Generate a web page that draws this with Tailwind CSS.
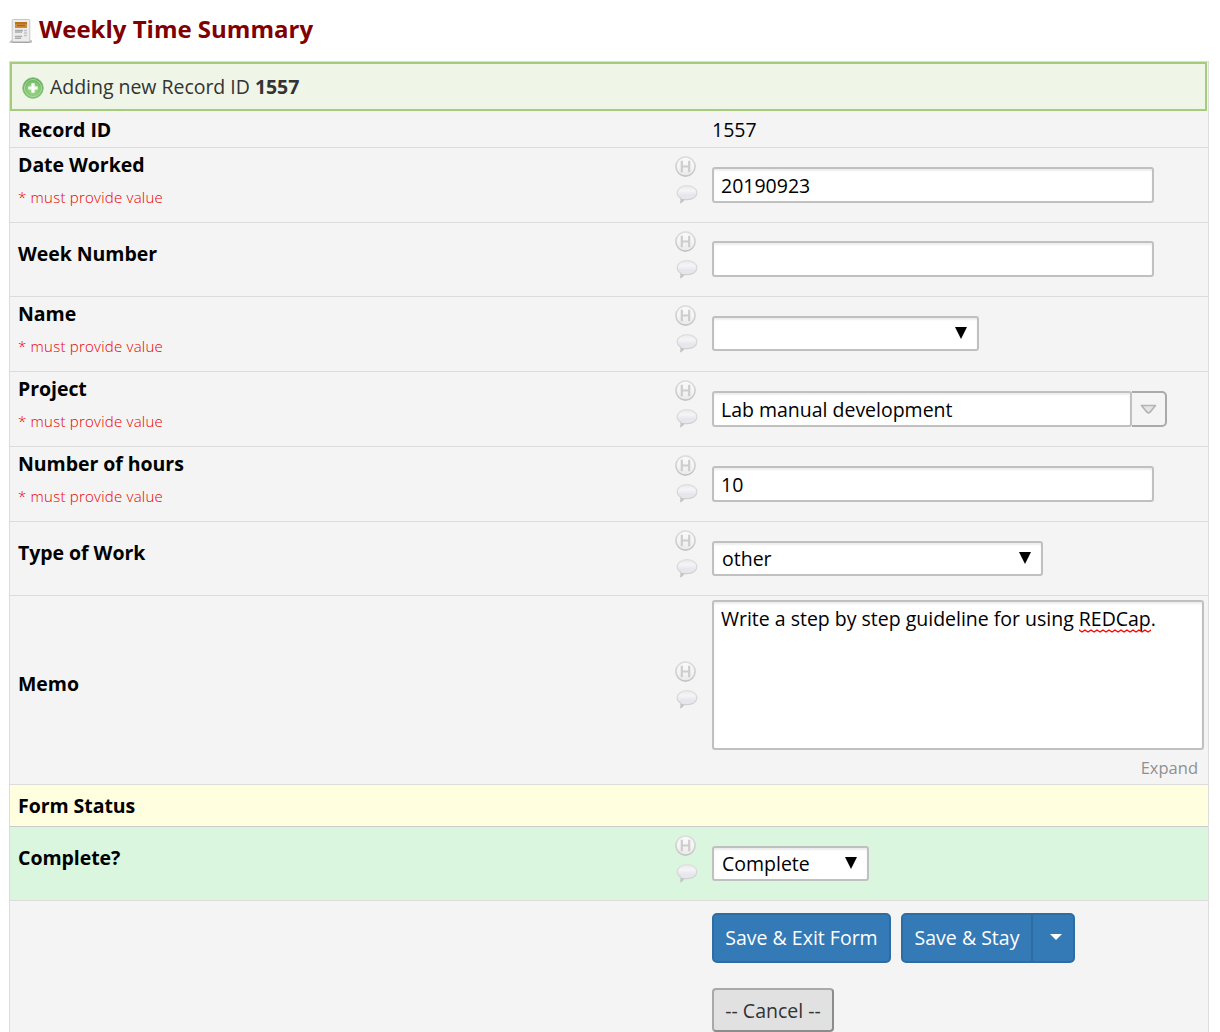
<!DOCTYPE html>
<html lang="en">
<head>
<meta charset="utf-8">
<title>Weekly Time Summary</title>
<script src="https://cdn.jsdelivr.net/npm/@tailwindcss/browser@4"></script>
</head>
<body class="bg-white font-['Open_Sans',sans-serif] text-[19.5px] text-black">
<svg class="absolute h-0 w-0">
  <defs>
    <linearGradient id="disc" x1="0" y1="0" x2="0" y2="1"><stop offset="0" stop-color="#fafafa"/><stop offset=".55" stop-color="#f4f4f4"/><stop offset="1" stop-color="#e9e9e9"/></linearGradient>
    <linearGradient id="bub" x1="0" y1="0" x2="0" y2="1"><stop offset="0" stop-color="#e9e9eb"/><stop offset=".3" stop-color="#f5f5f7"/><stop offset=".55" stop-color="#e6e6ed"/><stop offset="1" stop-color="#e8e8ec"/></linearGradient>
    <linearGradient id="edge" x1="0" y1="0" x2="0" y2="1"><stop offset="0" stop-color="#dedede"/><stop offset="1" stop-color="#c3c3c3"/></linearGradient>
    <linearGradient id="bedge" x1="0" y1="0" x2="0" y2="1"><stop offset="0" stop-color="#dfdfdf"/><stop offset="1" stop-color="#cdcdcf"/></linearGradient>
  </defs>
  <symbol id="tools" viewBox="0 0 24 50">
    <circle cx="10.5" cy="10.5" r="9.6" fill="url(#disc)" stroke="url(#edge)" stroke-width="1.6"/>
    <path d="M6.800 4.800v11.400M14.200 4.800v11.400M6.800 10.500h7.400" fill="none" stroke="#cdcdcd" stroke-width="2.200"/>
    <path d="M12 29.700c5.700 0 9.900 3.200 9.900 7.100s-4.300 6.800-9.600 6.800c-1 0-2-.1-2.900-.3-.9 1.500-2.100 2.700-3.700 3.300.4-1.400.5-2.900.2-4.300-2.200-1.300-3.700-3.200-3.700-5.500 0-3.900 4.200-7.100 9.800-7.100z" fill="url(#bub)" stroke="url(#bedge)" stroke-width="1.200"/>
    <path d="M5.400 42.600c.5 1.500.4 2.900 0 4.400 1.700-.6 2.900-1.800 3.900-3.500z" fill="#c4c4c6"/>
  </symbol>
</svg>
<div class="flex h-[1032px] flex-col overflow-hidden pl-[9px]">
  <header class="flex h-[61px] shrink-0 pt-[13px]">
    <svg class="mt-[4px] h-[27px] w-[24px]" viewBox="0 0 24 27">
      <path d="M0 25.800h23v-2.500H2z" fill="#bdbdbd"/>
      <rect x="3.200" y="2.500" width="17.600" height="22.500" rx="1" fill="#ececec" stroke="#c6c6c6"/>
      <path d="M3.200 25.300h17.600" stroke="#9c9c9c"/>
      <rect x="6" y="5" width="12" height="6" fill="#cd8a38"/><path d="M6 6h12" stroke="#b06d14" stroke-width="1.500"/><path d="M8 8.500h8" stroke="#a0651c" stroke-width="1.200"/>
      <path d="M6 13.500h8M6 15.200h7M6 19.500h7M6 21.300h6" stroke="#aaa" stroke-width="1.300"/><path d="M15 13.500h3M15 16h3M15 18.500h3" stroke="#c4c4c4" stroke-width="1.500"/>
    </svg>
    <h1 class="ml-[6px] text-[24px] leading-[32px] font-bold whitespace-nowrap text-[#800000]">Weekly Time Summary</h1>
  </header>
  <main class="flex w-[1200px] grow flex-col border-x border-t border-[#dcdcdc] bg-[#f4f4f4]">
    <div class="-mr-px flex h-[49px] w-[1197px] shrink-0 items-center border-2 border-[#a5cc7a] bg-[#eff6e8] pl-[10px] text-[#333]">
      <svg class="mt-[3px] h-[22px] w-[22px]" viewBox="0 0 22 22">
        <defs><radialGradient id="g" cx=".5" cy=".6" r=".55"><stop offset="0" stop-color="#a5db8c"/><stop offset=".7" stop-color="#7cc46c"/><stop offset="1" stop-color="#5ba653"/></radialGradient></defs>
        <circle cx="11" cy="11" r="10.300" fill="url(#g)" stroke="#8cb886" stroke-width=".8"/><circle cx="11" cy="11" r="8.500" fill="none" stroke="#b9e2ac" stroke-width=".8"/>
        <path d="M11 6.300v9.400M6.300 11h9.400" stroke="#fff" stroke-width="3.200"/>
      </svg>
      <p class="ml-[6px] leading-[28px] tracking-[-0.03px] whitespace-nowrap">Adding new Record ID <b class="font-bold">1557</b></p>
    </div>
    <div class="grid h-[37px] shrink-0 grid-cols-[657px_37px_1fr] border-b border-[#dcdcdc] pl-[8px]">
      <div class="pt-[5px] leading-[28px] font-bold tracking-[-0.05px]">Record ID</div><div></div><div class="pt-[5px] leading-[28px]">1557</div>
    </div>
    <div class="grid h-[75px] shrink-0 grid-cols-[657px_37px_1fr] border-b border-[#dcdcdc] pl-[8px]">
      <div class="pt-[3px]"><div class="leading-[28px] font-bold tracking-[-0.05px]">Date Worked</div><div class="mt-[4px] text-[15px] leading-[28px] font-light tracking-[0.23px] text-[#e80000]">* must provide value</div></div>
      <svg class="mt-[8px] h-[50px] w-[24px]"><use href="#tools"/></svg>
      <div class="mt-[19px] h-[36px] w-[442px] rounded-[3px] border-2 border-[#c0c0c0] bg-white pl-[7px] leading-[34px] shadow-[inset_0_2px_2px_#eee]">20190923</div>
    </div>
    <div class="grid h-[74px] shrink-0 grid-cols-[657px_37px_1fr] border-b border-[#dcdcdc] pl-[8px]">
      <div class="pt-[17px] leading-[28px] font-bold tracking-[-0.05px]">Week Number</div>
      <svg class="mt-[8px] h-[50px] w-[24px]"><use href="#tools"/></svg>
      <div class="mt-[18px] h-[36px] w-[442px] rounded-[3px] border-2 border-[#c0c0c0] bg-white shadow-[inset_0_2px_2px_#eee]"></div>
    </div>
    <div class="grid h-[75px] shrink-0 grid-cols-[657px_37px_1fr] border-b border-[#dcdcdc] pl-[8px]">
      <div class="pt-[3px]"><div class="leading-[28px] font-bold tracking-[-0.05px]">Name</div><div class="mt-[4px] text-[15px] leading-[28px] font-light tracking-[0.23px] text-[#e80000]">* must provide value</div></div>
      <svg class="mt-[8px] h-[50px] w-[24px]"><use href="#tools"/></svg>
      <div class="mt-[19px] flex h-[35px] w-[267px] justify-end rounded-[3px] border-2 border-[#c0c0c0] bg-white pr-[9px] shadow-[inset_0_2px_2px_#eee]"><svg class="mt-[9px] h-[12px] w-[13px]" viewBox="0 0 13 12"><path d="M0 0h12L6 12z"/></svg></div>
    </div>
    <div class="grid h-[75px] shrink-0 grid-cols-[657px_37px_1fr] border-b border-[#dcdcdc] pl-[8px]">
      <div class="pt-[3px]"><div class="leading-[28px] font-bold tracking-[-0.05px]">Project</div><div class="mt-[4px] text-[15px] leading-[28px] font-light tracking-[0.23px] text-[#e80000]">* must provide value</div></div>
      <svg class="mt-[8px] h-[50px] w-[24px]"><use href="#tools"/></svg>
      <div class="mt-[19px] flex h-[36px]">
        <div class="w-[420px] rounded-[3px] border-2 border-[#c0c0c0] bg-white pl-[7px] leading-[34px] tracking-[-0.01px] shadow-[inset_0_2px_2px_#eee]">Lab manual development</div>
        <div class="flex w-[35px] items-center justify-center rounded-r-[5px] border-y-2 border-r-2 border-[#aaa]"><svg class="h-[10px] w-[17px]" viewBox="0 0 17 10"><path d="M1.500 1.500h14L10 8.200q-1.500 1.300-3 0z" fill="#e4e4e4" stroke="#b4b4b4" stroke-width="1.700" stroke-linejoin="round"/></svg></div>
      </div>
    </div>
    <div class="grid h-[75px] shrink-0 grid-cols-[657px_37px_1fr] border-b border-[#dcdcdc] pl-[8px]">
      <div class="pt-[3px]"><div class="leading-[28px] font-bold tracking-[-0.05px]">Number of hours</div><div class="mt-[4px] text-[15px] leading-[28px] font-light tracking-[0.23px] text-[#e80000]">* must provide value</div></div>
      <svg class="mt-[8px] h-[50px] w-[24px]"><use href="#tools"/></svg>
      <div class="mt-[19px] h-[36px] w-[442px] rounded-[3px] border-2 border-[#c0c0c0] bg-white pl-[7px] leading-[34px] shadow-[inset_0_2px_2px_#eee]">10</div>
    </div>
    <div class="grid h-[74px] shrink-0 grid-cols-[657px_37px_1fr] border-b border-[#dcdcdc] pl-[8px]">
      <div class="pt-[17px] leading-[28px] font-bold tracking-[-0.05px]">Type of Work</div>
      <svg class="mt-[8px] h-[50px] w-[24px]"><use href="#tools"/></svg>
      <div class="mt-[19px] flex h-[35px] w-[331px] justify-between rounded-[3px] border-2 border-[#c0c0c0] bg-white pr-[9px] pl-[8px] leading-[32px] shadow-[inset_0_2px_2px_#eee]">other<svg class="mt-[9px] h-[12px] w-[13px]" viewBox="0 0 13 12"><path d="M0 0h12L6 12z"/></svg></div>
    </div>
    <div class="grid h-[189px] shrink-0 grid-cols-[657px_37px_1fr] border-b border-[#dcdcdc] pl-[8px]">
      <div class="pt-[74px] leading-[28px] font-bold tracking-[-0.05px]">Memo</div>
      <svg class="mt-[65px] h-[50px] w-[24px]"><use href="#tools"/></svg>
      <div class="pt-[4px]">
        <div class="h-[150px] w-[492px] rounded-[3px] border-2 border-[#c0c0c0] bg-white pt-[3px] pl-[7px] leading-[28px] tracking-[-0.01px] whitespace-nowrap shadow-[inset_0_2px_2px_#eee]">Write a step by step guideline for using <span class="relative">REDCap<svg class="absolute bottom-[-1px] left-0 h-[4px] w-full"><defs><pattern id="wave" width="6" height="4" patternUnits="userSpaceOnUse"><path d="M-1.500 2.500L0 1l3 2 3-2 1.500 1.500" fill="none" stroke="#f00" stroke-width="1.300"/></pattern></defs><rect width="100%" height="4" fill="url(#wave)"/></svg></span>.</div>
        <div class="mt-[5px] w-[486px] text-right text-[16.500px] leading-[26px] text-[#909090]">Expand</div>
      </div>
    </div>
    <div class="h-[42px] shrink-0 border-b border-[#ccc] bg-[#ffffdf] pt-[7px] pl-[8px] leading-[28px] font-bold tracking-[-0.05px]">Form Status</div>
    <div class="grid h-[74px] shrink-0 grid-cols-[657px_37px_1fr] border-b border-[#dcdcdc] bg-[#dbf6df] pl-[8px]">
      <div class="pt-[17px] leading-[28px] font-bold tracking-[-0.05px]">Complete?</div>
      <svg class="mt-[8px] h-[50px] w-[24px]"><use href="#tools"/></svg>
      <div class="mt-[19px] flex h-[35px] w-[157px] justify-between rounded-[3px] border-2 border-[#c0c0c0] bg-white pr-[9px] pl-[8px] leading-[32px] shadow-[inset_0_2px_2px_#eee]">Complete<svg class="mt-[9px] h-[12px] w-[13px]" viewBox="0 0 13 12"><path d="M0 0h12L6 12z"/></svg></div>
    </div>
    <div class="pt-[12px] pl-[702px]">
      <div class="flex gap-[10px] text-white">
        <button class="h-[50px] w-[179px] rounded-[5px] border-2 border-[#2e6da4] bg-[#337ab7] whitespace-nowrap">Save &amp; Exit Form</button>
        <div class="flex h-[50px] w-[174px] rounded-[5px] border-2 border-[#2e6da4] bg-[#337ab7]">
          <button class="w-[130px] border-r-2 border-[#2e6da4] whitespace-nowrap">Save &amp; Stay</button>
          <button class="flex grow items-center justify-center pl-[5px]"><svg class="-mt-[2px] h-[6px] w-[12px]" viewBox="0 0 12 6"><path d="M0 0h12L6 6z" fill="#fff"/></svg></button>
        </div>
      </div>
      <button class="mt-[25px] block h-[44px] w-[122px] rounded-[4px] border-2 border-[#a9a9a9] border-r-[#8c8c8c] border-b-[#8c8c8c] bg-[#e1e1e1] pt-[2px] whitespace-nowrap text-[#333]">-- Cancel --</button>
    </div>
  </main>
</div>
</body>
</html>
